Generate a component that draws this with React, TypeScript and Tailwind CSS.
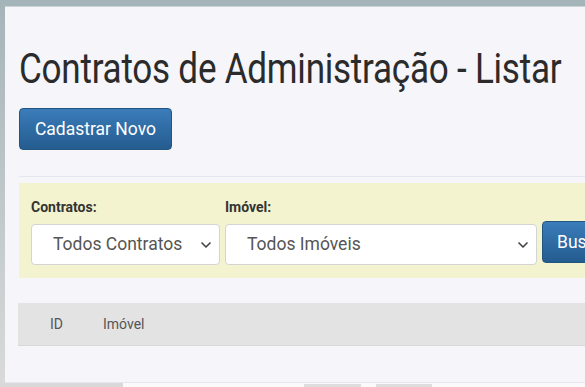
import { ChevronDown } from 'lucide-react';

function Select({ label, value, width }: { label: string; value: string; width: string }) {
  return (
    <div className="flex flex-col gap-[10px]">
      <span className="text-[14px] font-bold text-[#333] leading-none">{label}</span>
      <div
        className={`${width} h-[41px] flex items-center justify-between pl-[21px] pr-[5px] bg-white border border-[#d4d4d4] rounded-[4px] text-[17.5px] text-[#555]`}
      >
        <span>{value}</span>
        <ChevronDown className="w-4 h-4 text-[#444]" strokeWidth={2.5} />
      </div>
    </div>
  );
}

export default function App() {
  return (
    <div
      className="w-[585px] h-[387px] overflow-hidden bg-gradient-to-b from-[#a4b4b9] to-[#dadada] flex flex-col"
      style={{ fontFamily: 'Roboto, "Liberation Sans", sans-serif' }}
    >
      <div className="pl-[5px] pt-[6px]">
        <div className="w-[620px] h-[377px] bg-[#f5f5fa] border-t border-b border-[#c9d3d6] border-b-[#e6e6ec] pl-[14px] flex flex-col">
          <h1 className="mt-[41px] text-[42px] leading-none tracking-[-0.3px] text-[#2b2b2b] whitespace-nowrap scale-x-[0.835] origin-left">
            Contratos de Administração - Listar
          </h1>
          <div className="mt-[18px]">
            <button className="w-[153px] h-[42px] rounded-[4px] border border-[#22557f] bg-gradient-to-b from-[#3b7cba] to-[#245c8f] text-white text-[17.5px]">
              Cadastrar Novo
            </button>
          </div>
          <div className="mt-[26px] border-t border-[#e6e6ee]" />
          <div className="mt-[6px] h-[95px] bg-[#f3f3cf] flex items-end gap-[5px] pl-[12px] pb-[13px]">
            <Select label="Contratos:" value="Todos Contratos" width="w-[189px]" />
            <Select label="Imóvel:" value="Todos Imóveis" width="w-[312px]" />
            <button className="mb-[2px] h-[42px] w-[90px] rounded-[4px] border border-[#22557f] bg-gradient-to-b from-[#3b7cba] to-[#245c8f] text-white text-[17.5px] text-left pl-[14px]">
              Buscar
            </button>
          </div>
          <div className="mt-[25px] -ml-[1px] h-[43px] bg-[#e3e3e3] border-b border-[#d8d8d8] flex items-center text-[14px] text-[#555]">
            <span className="ml-[32px]">ID</span>
            <span className="ml-[40px]">Imóvel</span>
          </div>
        </div>
      </div>
      <div className="flex-1 flex">
        <div className="w-[123px] bg-[#d9d9d9]" />
        <div className="flex-1 bg-[#fafafa] flex pt-[1px]">
          <div className="ml-[181px] w-[57px] bg-[#dedede]" />
          <div className="ml-[15px] w-[56px] bg-[#dedede]" />
        </div>
      </div>
    </div>
  );
}
